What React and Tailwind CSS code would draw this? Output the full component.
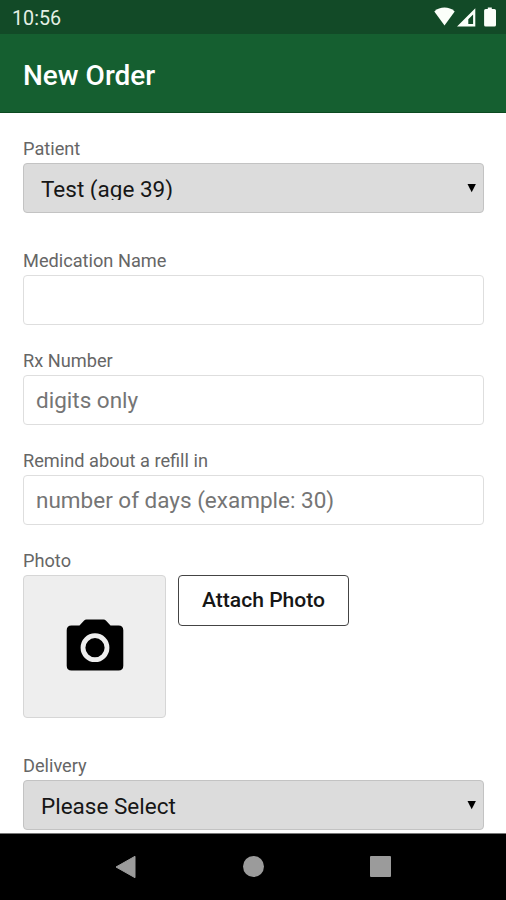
import { useState } from 'react';

const TEXT_FIELDS = [
  { id: 'medication', label: 'Medication Name', placeholder: '' },
  { id: 'rx', label: 'Rx Number', placeholder: 'digits only' },
  { id: 'refill', label: 'Remind about a refill in', placeholder: 'number of days (example: 30)' },
];

const StatusBar = () => (
  <div className="flex h-[34px] shrink-0 items-center justify-between bg-[#124a27] pr-[7px] pl-3 text-[#e4f0e4]">
    <span className="pt-1 text-[19.7px] leading-6">10:56</span>
    <svg width="65" height="20" viewBox="0 0 65 20" fill="#fbfffa">
      {/* wifi */}
      <path d="M0.300 4.400C3.100 1.800 6.900 0.600 10.500 0.600s7.400 1.200 10.200 3.800L10.500 18.500z" />
      {/* signal */}
      <path fillRule="evenodd" d="M23 19.500L41.300 1.300v18.200zM34.300 17h4.800V7.500l-4.800 4.800z" />
      {/* battery */}
      <path d="M53.800 0.600h4v1.400h2.600q1.600 0 1.600 1.600v14.300q0 1.600-1.600 1.600h-8.700q-1.600 0-1.600-1.600V3.600q0-1.600 1.600-1.600h2.100z" />
    </svg>
  </div>
);

const Field = ({ label, children }) => (
  <div className="flex flex-col gap-1">
    <label className="text-[18.2px] leading-5 text-[#666]">{label}</label>
    {children}
  </div>
);

const SelectBox = ({ value }) => (
  <button
    type="button"
    className="flex h-[50px] w-full items-center justify-between rounded-[4px] border border-[#c3c3c3] bg-[#dcdcdc] pr-[7px] pl-[17px] text-left"
  >
    <span className="h-6 overflow-hidden text-[22.500px] leading-[26px] text-[#161616]">{value}</span>
    <svg width="9" height="9" viewBox="0 0 9 9">
      <path d="M0.500 0h8.400L4.700 8.200z" fill="#000" />
    </svg>
  </button>
);

const NavBar = () => (
  <div className="flex h-[66px] shrink-0 items-center justify-between bg-black px-[115px] pb-px">
    <svg width="21" height="24" viewBox="0 0 21 24">
      <path d="M1 12L20 1.300v21.400z" fill="#9b9b9b" stroke="#9b9b9b" strokeWidth="1" strokeLinejoin="round" />
    </svg>
    <div className="size-[21px] rounded-full bg-[#9b9b9b]" />
    <div className="size-[21px] rounded-[1px] bg-[#9b9b9b]" />
  </div>
);

const App = () => {
  const [values, setValues] = useState({ medication: '', rx: '', refill: '' });

  const handleChange = (e) => {
    const { name, value } = e.target;
    setValues((prev) => ({ ...prev, [name]: value }));
  };

  return (
    <div className="flex h-[900px] w-[506px] flex-col overflow-hidden bg-white font-['Roboto',sans-serif]">
      <StatusBar />

      {/* Title bar */}
      <header className="flex h-[79px] shrink-0 items-center border-b border-[#0c4a20] bg-[#155f30] pt-1.5 pl-[23px]">
        <h1 className="text-[28px] leading-8 font-medium text-white">New Order</h1>
      </header>

      {/* Order form */}
      <main className="flex h-[721px] shrink-0 flex-col border-b border-[#777] pt-[26px] pr-[22px] pl-[23px]">
        <Field label="Patient">
          <SelectBox value="Test (age 39)" />
        </Field>

        <div className="flex flex-col gap-[26px] pt-[38px]">
          {TEXT_FIELDS.map((f) => (
            <Field key={f.id} label={f.label}>
              <input
                name={f.id} value={values[f.id]} onChange={handleChange} placeholder={f.placeholder}
                className="h-[50px] w-full rounded-[4px] border border-[#dedede] bg-white px-3 text-[22.500px] text-[#161616] outline-none placeholder:text-[#757575]"
              />
            </Field>
          ))}

          <Field label="Photo">
            <div className="flex items-start gap-3">
              <div className="flex size-[143px] items-center justify-center rounded-[4px] border border-[#d6d6d6] bg-[#eee] pb-1">
                <svg width="58" height="52" viewBox="0 0 58 52">
                  <path
                    d="M20.500 0.500h17q1.500 0 2.600 1.200l4.400 4.800H52.500q4.800 0 4.800 4.800v35.400q0 4.800-4.800 4.800h-47q-4.800 0-4.800-4.800V11.300q0-4.800 4.800-4.800h8l4.400-4.800q1.100-1.200 2.600-1.200z"
                    fill="#000"
                  />
                  <circle cx="29" cy="28.700" r="12" fill="none" stroke="#eee" strokeWidth="4.800" />
                </svg>
              </div>
              <button type="button" className="h-[51px] w-[171px] rounded-[4px] border border-[#444] bg-white pb-0.5 text-[21.100px] font-medium text-[#161616]">
                Attach Photo
              </button>
            </div>
          </Field>
        </div>

        <div className="pt-[38px]">
          <Field label="Delivery">
            <SelectBox value="Please Select" />
          </Field>
        </div>
      </main>

      <NavBar />
    </div>
  );
};

export default App;
